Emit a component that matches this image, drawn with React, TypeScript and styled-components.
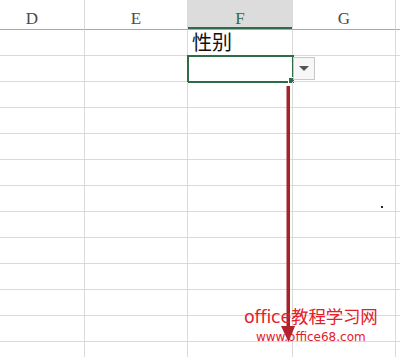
import styled, { createGlobalStyle } from "styled-components"

const GlobalStyle = createGlobalStyle`
  html, body {
    margin: 0;
    padding: 0;
    background: #ffffff;
    overflow: hidden;
  }
`

const columns = ["D", "E", "F", "G", ""]
const widths = [105, 103, 105, 103, 30]
const ROWS = 13

const Frame = styled.div`
  position: relative;
  width: 400px;
  height: 357px;
  overflow: hidden;
  background: #fff;
`

const Sheet = styled.div`
  display: grid;
  grid-template-columns: ${widths.map((w) => w + "px").join(" ")};
  grid-auto-rows: 26px;
  grid-template-rows: 30px;
  margin-left: -20px;
`

const HeadCell = styled.div<{ $active?: boolean }>`
  display: flex;
  justify-content: center;
  align-items: flex-start;
  padding-top: 9px;
  box-sizing: border-box;
  font-family: "Liberation Serif", serif;
  font-size: 17px;
  color: ${(p) => (p.$active ? "#2f6b47" : "#4a4a4a")};
  background: ${(p) => (p.$active ? "#dcdcdc" : "#ffffff")};
  border-right: 1px solid #dadada;
  border-bottom: 1px solid #a8a8a8;
  box-shadow: ${(p) => (p.$active ? "inset 0 -2px 0 #2f6b47" : "none")};
`

const Cell = styled.div<{ $selected?: boolean }>`
  position: relative;
  box-sizing: border-box;
  display: flex;
  align-items: flex-end;
  padding: 0 0 2px 4px;
  border-right: 1px solid #d9d9d9;
  border-bottom: 1px solid #d9d9d9;
  font-family: "Noto Sans CJK SC", sans-serif;
  font-size: 20px;
  line-height: 22px;
  color: #111;
  outline: ${(p) => (p.$selected ? "2px solid #2f6b47" : "none")};
  outline-offset: -1px;
`

const FillHandle = styled.span`
  position: absolute;
  right: -3px;
  bottom: -3px;
  width: 5px;
  height: 5px;
  background: #2f6b47;
  border: 1px solid #fff;
`

const DropButton = styled.span`
  position: absolute;
  left: 105px;
  top: 1px;
  width: 22px;
  height: 23px;
  box-sizing: border-box;
  background: #f7f7f7;
  border: 1px solid #c8c8c8;
  display: flex;
  align-items: center;
  justify-content: center;
  &::after {
    content: "";
    border-left: 5px solid transparent;
    border-right: 5px solid transparent;
    border-top: 5px solid #555;
  }
`

const Arrow = styled.svg`
  position: absolute;
  left: 278px;
  top: 86px;
`

const Dot = styled.span`
  position: absolute;
  left: 381px;
  top: 206px;
  width: 2px;
  height: 2px;
  background: #222;
`

const Watermark = styled.div`
  position: absolute;
  left: 244px;
  top: 305px;
  display: flex;
  flex-direction: column;
  align-items: center;
  color: #e3202a;
`

const MarkTitle = styled.div`
  font-family: "DejaVu Sans", "Noto Sans CJK SC", sans-serif;
  font-size: 17.5px;
  line-height: 24px;
  letter-spacing: -0.2px;
`

const MarkUrl = styled.div`
  font-family: "DejaVu Sans", sans-serif;
  font-size: 12px;
  line-height: 14px;
  margin-top: 1px;
`

export default function App() {
  return (
    <Frame>
      <GlobalStyle />
      <Sheet>
        {columns.map((c) => (
          <HeadCell key={"h" + c} $active={c === "F"}>
            {c}
          </HeadCell>
        ))}
        {Array.from({ length: ROWS }).map((_, r) =>
          columns.map((c) => {
            const selected = r === 1 && c === "F"
            return (
              <Cell key={r + c} $selected={selected}>
                {r === 0 && c === "F" ? "性别" : null}
                {selected && (
                  <>
                    <FillHandle />
                    <DropButton />
                  </>
                )}
              </Cell>
            )
          })
        )}
      </Sheet>
      <Arrow width="20" height="260" viewBox="0 0 20 260">
        <rect x="8.5" y="0" width="3.5" height="246" fill="#a5222a" />
        <polygon points="3,240 17,240 10.5,256" fill="#b3232b" />
      </Arrow>
      <Dot />
      <Watermark>
        <MarkTitle>office教程学习网</MarkTitle>
        <MarkUrl>www.office68.com</MarkUrl>
      </Watermark>
    </Frame>
  )
}
